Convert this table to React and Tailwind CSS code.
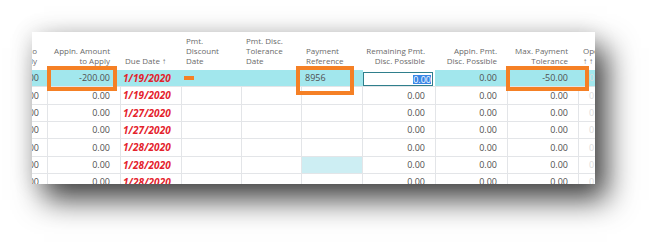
import React from "react";

const cols = [
  { w: "w-[16px]", align: "right", head: ["Amount to", "Apply"] },
  { w: "w-[73px]", align: "right", head: ["Appln. Amount", "to Apply"] },
  { w: "w-[61px]", align: "left", head: ["Due Date ↑"] },
  { w: "w-[60px]", align: "left", head: ["Pmt.", "Discount", "Date"] },
  { w: "w-[60px]", align: "left", head: ["Pmt. Disc.", "Tolerance", "Date"] },
  { w: "w-[61px]", align: "left", head: ["Payment", "Reference"] },
  { w: "w-[73px]", align: "right", head: ["Remaining Pmt.", "Disc. Possible"] },
  { w: "w-[72px]", align: "right", head: ["Appln. Pmt.", "Disc. Possible"] },
  { w: "w-[71px]", align: "right", head: ["Max. Payment", "Tolerance"] },
  { w: "w-[16px]", align: "left", head: ["Open", "↑ ↑"] },
];

const rows = [
  { h: "h-[17px]", date: "1/19/2020", sel: true },
  { h: "h-[18px]", date: "1/19/2020" },
  { h: "h-[17px]", date: "1/27/2020" },
  { h: "h-[17px]", date: "1/27/2020" },
  { h: "h-[18px]", date: "1/28/2020" },
  { h: "h-[17px]", date: "1/28/2020", cyan: true },
  { h: "h-[17px]", date: "1/28/2020" },
];

function Num({ children, pr = "pr-[10px]" }) {
  return (
    <div className={`flex h-full items-center justify-end ${pr} whitespace-nowrap`}>
      <span>{children}</span>
    </div>
  );
}

function Row({ r }) {
  const bg = r.sel ? "bg-[#a2e7ed]" : "bg-white";
  const line = r.sel ? "border-[#a2e7ed]" : "border-[#e3e5e8]";
  const cell = `h-full overflow-hidden border-r ${line}`;
  return (
    <div className={`flex ${r.h} border-b border-[#e3e5e8] ${bg}`}>
      <div className={`w-[16px] ${cell}`}>
        <Num pr="pr-[8px]">{r.sel ? "-200.00" : "0.00"}</Num>
      </div>
      <div className={`w-[73px] ${cell}`}>
        <Num>{r.sel ? "-200.00" : "0.00"}</Num>
      </div>
      <div className={`w-[61px] ${cell} flex items-center pl-[2px]`}>
        <span className="font-bold italic text-[#e4222c] text-[10px] tracking-[0.1px]">{r.date}</span>
      </div>
      <div className={`w-[60px] ${cell} flex items-center pl-[2px]`}>
        {r.sel && <div className="w-[10px] h-[4px] bg-[#f58025]" />}
      </div>
      <div className={`w-[60px] ${cell}`} />
      <div className={`w-[61px] ${cell} flex items-center pl-[3px] ${r.cyan ? "bg-[#cdeef3]" : ""}`}>
        {r.sel && <span>8956</span>}
      </div>
      <div className={`w-[73px] ${cell}`}>
        {r.sel ? (
          <div className="h-full pt-[2px] pr-[2px] bg-white">
            <div className="h-full border border-[#2f7f8c] bg-white flex items-center justify-end pr-[1px]">
              <span className="bg-[#3a87e6] text-white leading-[9px]">0.00</span>
            </div>
          </div>
        ) : (
          <Num>0.00</Num>
        )}
      </div>
      <div className={`w-[72px] ${cell}`}>
        <Num>0.00</Num>
      </div>
      <div className={`w-[71px] ${cell}`}>
        <Num>{r.sel ? "-50.00" : "0.00"}</Num>
      </div>
      <div className="w-[16px] h-full overflow-hidden flex items-center pl-[10px] text-[#dcdcdc]">
        <span>0</span>
      </div>
    </div>
  );
}

export default function App() {
  return (
    <div className="w-[660px] h-[249px] bg-white overflow-hidden pt-[32px] pl-[32px]" style={{ fontFamily: '"Open Sans", "Noto Sans", sans-serif' }}>
      <div className="relative w-[563px] h-[152px] bg-white overflow-hidden shadow-[12px_16px_28px_rgba(0,0,0,0.72),0_0_22px_rgba(0,0,0,0.12)]">
        <div className="flex h-[38px] text-[8px] leading-[10px] text-[#6a6a6a]">
          {cols.map((c, i) => (
            <div
              key={i}
              className={`${c.w} h-full overflow-hidden flex flex-col justify-end pb-[4px] whitespace-nowrap ${
                c.align === "right" ? "items-end pr-[11px]" : "items-start pl-[4px]"
              }`}
            >
              {c.head.map((t, j) => (
                <div key={j}>{t}</div>
              ))}
            </div>
          ))}
        </div>
        <div className="text-[9px] text-[#505050]">
          {rows.map((r, i) => (
            <Row key={i} r={r} />
          ))}
        </div>
        <div className="absolute left-[15px] top-[34px] w-[70px] h-[25px] border-[4px] border-[#f58025]" />
        <div className="absolute left-[264px] top-[34px] w-[58px] h-[29px] border-[4px] border-[#f58025]" />
        <div className="absolute left-[474px] top-[34px] w-[83px] h-[25px] border-[4px] border-[#f58025]" />
      </div>
    </div>
  );
}
